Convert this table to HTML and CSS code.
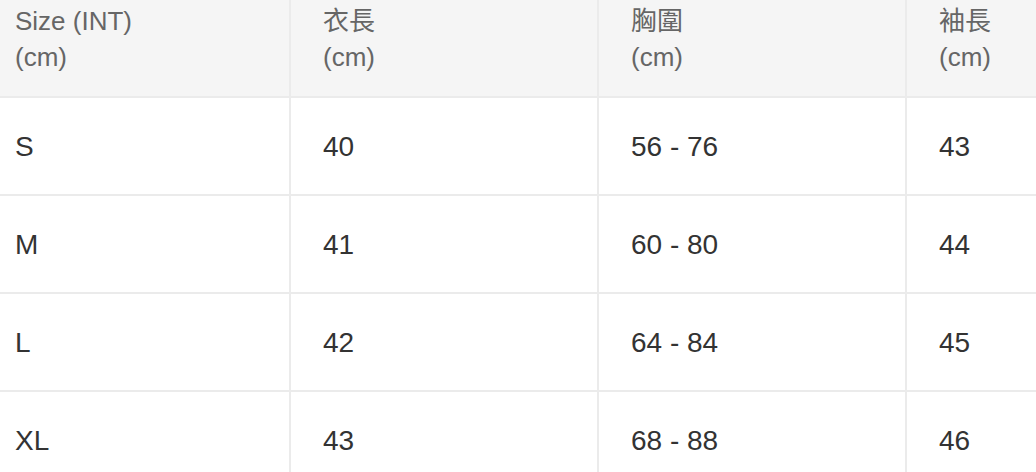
FILE: index.html
```html
<!DOCTYPE html>
<html lang="zh-Hant">
<head>
<meta charset="utf-8">
<title>Size chart</title>
<link rel="stylesheet" href="styles.css">
</head>
<body>
<table class="size-table">
  <colgroup>
    <col class="col-size">
    <col class="col-std">
    <col class="col-std">
    <col class="col-last">
  </colgroup>
  <thead>
    <tr>
      <th class="first">Size (INT)<br>(cm)</th>
      <th>衣長<br>(cm)</th>
      <th>胸圍<br>(cm)</th>
      <th class="last">袖長<br>(cm)</th>
    </tr>
  </thead>
  <tbody>
    <tr><td class="first">S</td><td>40</td><td>56 - 76</td><td class="last">43</td></tr>
    <tr><td class="first">M</td><td>41</td><td>60 - 80</td><td class="last">44</td></tr>
    <tr><td class="first">L</td><td>42</td><td>64 - 84</td><td class="last">45</td></tr>
    <tr><td class="first">XL</td><td>43</td><td>68 - 88</td><td class="last">46</td></tr>
  </tbody>
</table>
</body>
</html>
```

FILE: styles.css
```css
html, body {
  margin: 0;
  padding: 0;
  background: #ffffff;
  overflow: hidden;
}

body {
  font-family: "Liberation Sans", Arial, "Noto Sans CJK TC", sans-serif;
}

.size-table {
  border-collapse: separate;
  border-spacing: 0;
  table-layout: fixed;
  width: 1036px;
}

.col-size { width: 291px; }
.col-std { width: 308px; }
.col-last { width: 129px; }

.size-table th,
.size-table td {
  box-sizing: border-box;
  border-right: 2px solid #ebebeb;
  border-bottom: 2px solid #ebebeb;
  padding: 0 0 0 32px;
  text-align: left;
  white-space: nowrap;
  overflow: hidden;
}

.size-table th.first,
.size-table td.first {
  padding-left: 15px;
}

.size-table th.last,
.size-table td.last {
  border-right: 0;
}

.size-table th {
  height: 98px;
  vertical-align: top;
  padding-top: 3px;
  background: #f5f5f5;
  color: #666666;
  font-weight: normal;
  font-size: 26px;
  line-height: 36px;
}

.size-table td {
  height: 98px;
  vertical-align: middle;
  padding-top: 2px;
  color: #333333;
  font-size: 28px;
  line-height: 32px;
}
```
